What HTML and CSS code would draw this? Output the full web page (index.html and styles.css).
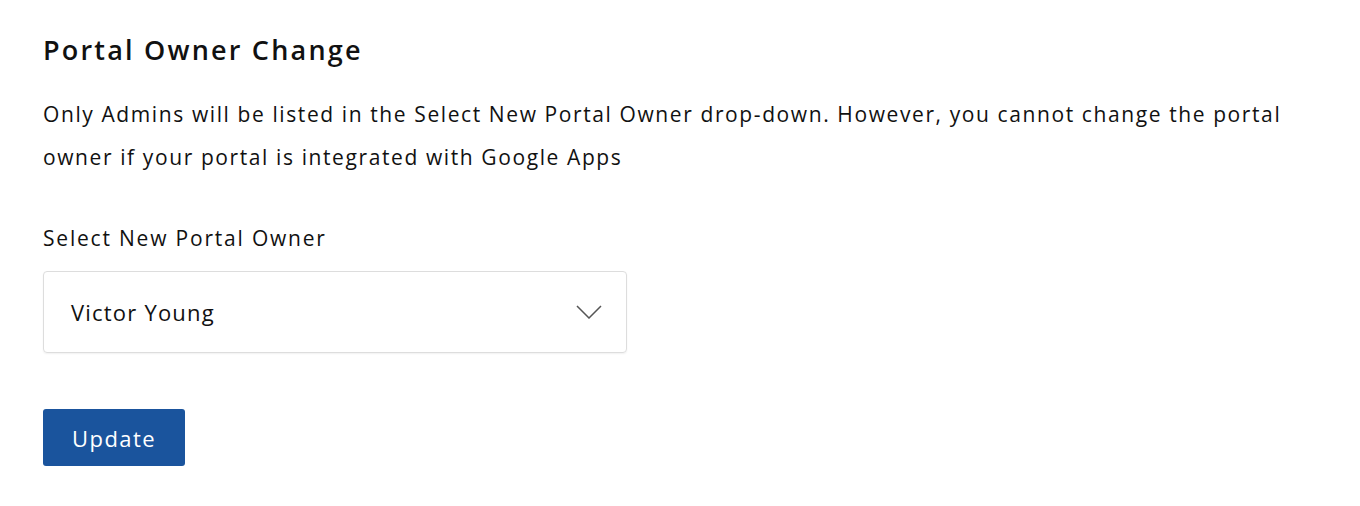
FILE: index.html
```
<!DOCTYPE html>
<html>
<head>
    <meta charset="UTF-8">
    <title>Portal Owner Change</title>
    <link rel="stylesheet" href="styles.css">
</head>
<body>
    <div class="container">
        <h1>Portal Owner Change</h1>
        <p class="note">Only Admins will be listed in the Select New Portal Owner drop-down. However, you cannot change the portal owner if your portal is integrated with Google Apps</p>
        <div class="form-group">
            <label for="ownerSelect">Select New Portal Owner</label>
            <div class="select-box" id="ownerSelect">
                <span class="select-value">Victor Young</span>
                <svg class="chevron" width="26" height="14" viewBox="0 0 26 14">
                    <path d="M1 1 L13 13 L25 1" fill="none" stroke="#555" stroke-width="1.5"/>
                </svg>
            </div>
        </div>
        <button class="btn-update">Update</button>
    </div>
</body>
</html>
```

FILE: styles.css
```
body {
    margin: 0;
    font-family: "Open Sans", Arial, sans-serif;
    background-color: #fff;
    color: #111;
}
.container {
    padding: 31px 43px 30px;
}
h1 {
    font-size: 27px;
    font-weight: 600;
    letter-spacing: 2.2px;
    margin: 0 0 24px 0;
    line-height: 38px;
}
.note {
    font-size: 21px;
    letter-spacing: 1.6px;
    line-height: 43px;
    margin: 0 0 45px 0;
    max-width: 1275px;
}
.form-group {
    margin-bottom: 56px;
}
label {
    display: block;
    font-size: 21px;
    letter-spacing: 1.8px;
    line-height: 28px;
    margin-bottom: 19px;
}
.select-box {
    width: 584px;
    height: 82px;
    border: 1px solid #ddd;
    border-radius: 4px;
    display: flex;
    align-items: center;
    justify-content: space-between;
    padding: 0 24px 0 27px;
    box-sizing: border-box;
    box-shadow: 0 1px 2px rgba(0,0,0,.06);
}
.select-value {
    font-size: 22px;
    letter-spacing: 1.2px;
}
.btn-update {
    background-color: #1a549d;
    color: #fff;
    border: none;
    border-radius: 3px;
    width: 142px;
    height: 57px;
    font-family: inherit;
    font-size: 22px;
    letter-spacing: 1.4px;
    cursor: pointer;
}
```
